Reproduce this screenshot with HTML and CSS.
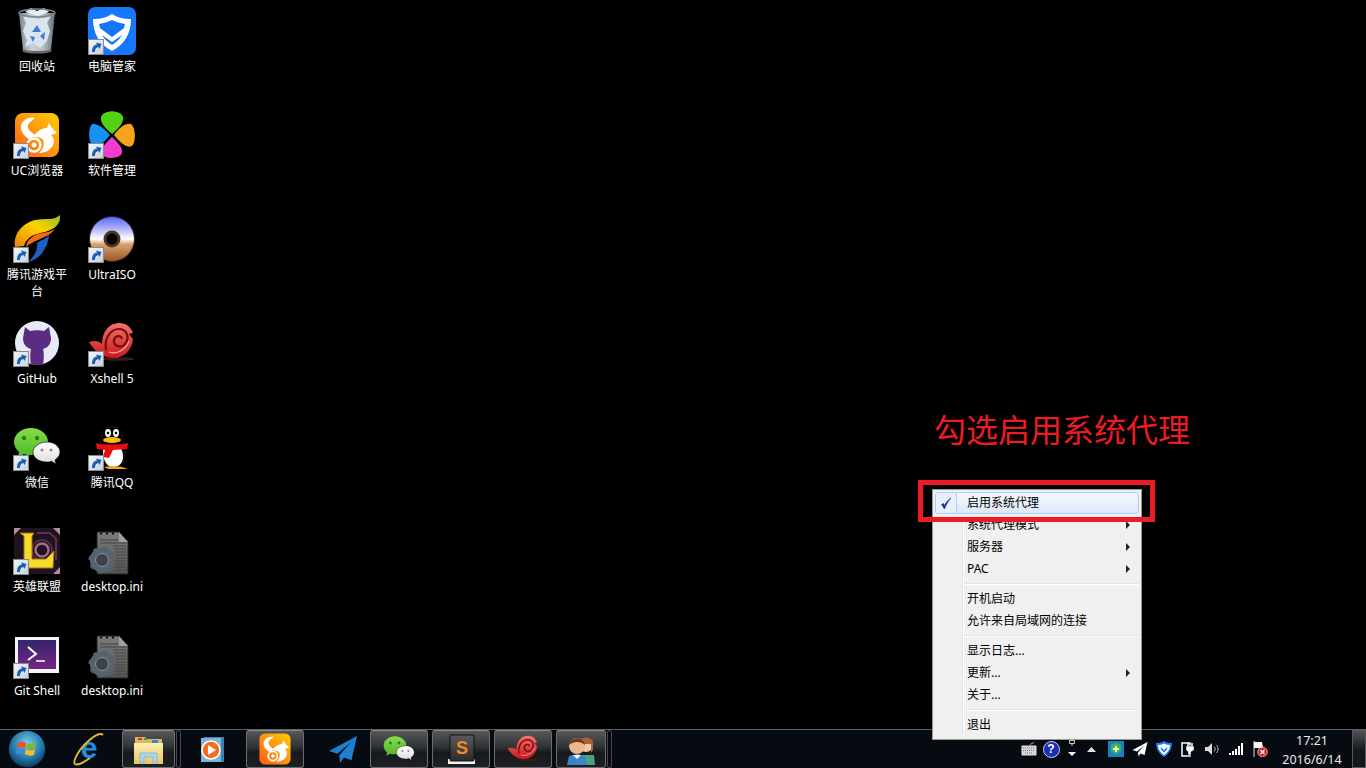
FILE: index.html
```html
<!DOCTYPE html>
<html lang="zh-CN">
<head>
    <meta charset="UTF-8">
    <title>启用系统代理</title>
    <link rel="stylesheet" href="styles.css">
</head>
<body>
    <svg class="sprite" width="0" height="0">
        <defs>
            <linearGradient id="ucBg" x1="1" y1="0" x2="0" y2="1"><stop offset="0" stop-color="#ffcf00"/><stop offset="1" stop-color="#ff5a1a"/></linearGradient>
            <linearGradient id="shortBg" x1="0" y1="0" x2="1" y2="1"><stop offset="0" stop-color="#f4f7fb"/><stop offset="1" stop-color="#c3d2e4"/></linearGradient>
            <linearGradient id="wechatBg" x1="0" y1="0" x2="0" y2="1"><stop offset="0" stop-color="#86dd4a"/><stop offset="1" stop-color="#4fb82a"/></linearGradient>
            <linearGradient id="wechatWhite" x1="0" y1="0" x2="0" y2="1"><stop offset="0" stop-color="#fff"/><stop offset="1" stop-color="#dcdcdc"/></linearGradient>
            <linearGradient id="snail" x1="0" y1="0" x2="0" y2="1"><stop offset="0" stop-color="#f4736a"/><stop offset="1" stop-color="#c9181e"/></linearGradient>
            <linearGradient id="paper" x1="0" y1="0" x2="0" y2="1"><stop offset="0" stop-color="#7a7a7a"/><stop offset="1" stop-color="#565656"/></linearGradient>
            <linearGradient id="gitBg" x1="0" y1="0" x2="0" y2="1"><stop offset="0" stop-color="#33256f"/><stop offset="1" stop-color="#74277f"/></linearGradient>
            <linearGradient id="binBg" x1="0" y1="0" x2="1" y2="0"><stop offset="0" stop-color="#87939f"/><stop offset=".35" stop-color="#dfe8f2"/><stop offset=".7" stop-color="#c5d0dc"/><stop offset="1" stop-color="#6b7682"/></linearGradient>
            <linearGradient id="discTop" x1="0" y1="0" x2="0" y2="1"><stop offset="0" stop-color="#5b63f5"/><stop offset=".25" stop-color="#a9adf8"/><stop offset=".5" stop-color="#ffffff"/><stop offset=".62" stop-color="#d8a06e"/><stop offset="1" stop-color="#9a5627"/></linearGradient>
            <linearGradient id="flame" x1="1" y1="0" x2="0" y2="1"><stop offset="0" stop-color="#8fc31f"/><stop offset=".45" stop-color="#ffd200"/><stop offset="1" stop-color="#e8800a"/></linearGradient>
            <linearGradient id="folder" x1="0" y1="0" x2="0" y2="1"><stop offset="0" stop-color="#fdf0b0"/><stop offset="1" stop-color="#e6c468"/></linearGradient>
            <radialGradient id="orb" cx=".5" cy=".35" r=".7"><stop offset="0" stop-color="#7fcdee"/><stop offset=".6" stop-color="#1f74a8"/><stop offset="1" stop-color="#0b2c4a"/></radialGradient>
            <linearGradient id="slate" x1="0" y1="0" x2="0" y2="1"><stop offset="0" stop-color="#5a5a5a"/><stop offset="1" stop-color="#2c2c2c"/></linearGradient>

            <symbol id="shortcut" viewBox="0 0 16 16">
                <rect x=".5" y=".5" width="15" height="15" fill="url(#shortBg)" stroke="#8a8a8a"/>
                <path d="M4 13C4 8 6 6 9 5.500L8 3.500 13.500 5 11.500 10 10.500 8C8 8.500 7 10 7 13Z" fill="#1d5fae"/>
            </symbol>
            <symbol id="uc" viewBox="0 0 48 48">
                <rect x="2" y="2" width="44" height="44" rx="8" fill="url(#ucBg)"/>
                <path d="M22 7C14 5 7 11 8 18 9 23 13 26 17 29L22 24C18 21 14 18 15 14 16 11 19 10 22 7Z" fill="#fff"/>
                <path d="M20 26C24 20 29 17 34 17L36 12 39 17 44 22 38 24C42 28 42 33 38 37 36 40 30 42 26 42 30 38 32 34 30 29 28 26 24 26 20 26Z" fill="#fff"/>
                <circle cx="21" cy="34" r="6.500" fill="none" stroke="#fff" stroke-width="2.500"/>
                <circle cx="21" cy="34" r="2.500" fill="#fff"/>
            </symbol>
            <symbol id="wechat" viewBox="0 0 48 48">
                <path d="M18 5C9 5 1 11 1 19 1 23 3 26 6 29L5 34 11 31C13 32 15 32 18 32 27 32 35 26 35 19 35 11 27 5 18 5Z" fill="url(#wechatBg)"/>
                <circle cx="11" cy="15" r="2.200" fill="#2e7d1a"/><circle cx="24" cy="15" r="2.200" fill="#2e7d1a"/>
                <path d="M34 19C26 19 20 24 20 29 20 35 26 39 34 39 36 39 37 39 38 38L43 41 42 37C45 35 47 32 47 29 47 24 42 19 34 19Z" fill="url(#wechatWhite)" stroke="#000" stroke-width=".6"/>
                <circle cx="29" cy="27" r="1.500" fill="#888"/><circle cx="38" cy="27" r="1.500" fill="#888"/>
            </symbol>
            <symbol id="xshell" viewBox="0 0 48 48">
                <ellipse cx="30" cy="40" rx="16" ry="1.800" fill="#3a1a1a"/>
                <path d="M1 23C7 21 11 22 14 25 14 13 21 4 31 4 38 4 43 8 45 14L41 15 45 20C44 31 36 39 26 39 15 39 7 33 1 23Z" fill="url(#snail)"/>
                <path d="M18 31C16 20 22 10 31 10 39 10 42 19 37 25 33 30 25 27 26 21 27 16 33 16 34 20" fill="none" stroke="#7c0d10" stroke-width="2.200"/>
                <path d="M21 33C28 36 38 31 41 22" fill="none" stroke="#f7a9a0" stroke-width="1.200"/>
            </symbol>
            <symbol id="iniFile" viewBox="0 0 48 48">
                <path d="M9 5H31L40 15V47H9Z" fill="url(#paper)" stroke="#222"/>
                <path d="M31 5V15H40Z" fill="#9f9f9f"/>
                <circle cx="13" cy="6.500" r="1.100" fill="#000"/><circle cx="19" cy="6.500" r="1.100" fill="#000"/><circle cx="25" cy="6.500" r="1.100" fill="#000"/>
                <path d="M12 13H30M12 16H38M25 19H38M26 22H38M27 25H38M27 28H38M27 31H38M27 34H38M27 37H38M27 40H38M27 43H38" stroke="#454545"/>
                <circle cx="14" cy="33" r="9.500" fill="none" stroke="#56636f" stroke-width="5.500"/>
                <circle cx="14" cy="33" r="12" fill="none" stroke="#56636f" stroke-width="3" stroke-dasharray="4 5.400"/>
                <circle cx="14" cy="33" r="6.500" fill="#3d4247" stroke="#8a97a4"/>
            </symbol>
            <symbol id="plane" viewBox="0 0 32 32">
                <path d="M31 2 1 18 10 21 24 9 12 23 13 31 17 25 25 28Z"/>
            </symbol>
        </defs>
    </svg>

    <main class="desktop">
        <a class="shortcut">
            <svg class="icon" viewBox="0 0 48 48">
                <path d="M6 6 10 43C12 46 36 46 38 43L42 6Z" fill="url(#binBg)" opacity=".9"/>
                <path d="M10 9 13 16 10 24 14 33 12 40 20 36 27 41 34 34 37 24 34 16 38 9 25 12Z" fill="#d9e4ef"/>
                <path d="M12 5 18 1 24 4 31 1 36 5 25 9Z" fill="#e9eef4"/>
                <ellipse cx="24" cy="6" rx="18" ry="4" fill="none" stroke="#7b858f" stroke-width="1.500"/>
                <path d="M19 25 24 18 28 25ZM17 29 22 30 20 35ZM27 29 32 25 31 33Z" fill="#3b7bd4"/>
                <path d="M10 43C12 46 36 46 38 43" fill="none" stroke="#6a6a6a" stroke-width="2.500"/>
            </svg>
            <span class="label">回收站</span>
        </a>
        <a class="shortcut">
            <svg class="icon" viewBox="0 0 48 48">
                <rect width="48" height="48" rx="7" fill="#1677fb"/>
                <path d="M24 7C30 11 36 12 43 12 43 26 37 37 24 44 11 37 5 26 5 12 12 12 18 11 24 7Z" fill="#fff"/>
                <path d="M24 13C28 15 32 16 37 17L36 21 24 30 12 21 11 17C16 16 20 15 24 13Z" fill="#1677fb"/>
                <path d="M14 28 24 35 34 28C32 32 28 35 24 38 20 35 16 32 14 28Z" fill="#1677fb"/>
            </svg>
            <svg class="badge"><use href="#shortcut"/></svg>
            <span class="label">电脑管家</span>
        </a>
        <a class="shortcut">
            <svg class="icon"><use href="#uc"/></svg>
            <svg class="badge"><use href="#shortcut"/></svg>
            <span class="label">UC浏览器</span>
        </a>
        <a class="shortcut">
            <svg class="icon" viewBox="0 0 48 48">
                <path d="M24 23C17 17 10 10 14 4 19 -1 29 -1 34 4 38 10 31 17 24 23Z" fill="#52d214"/>
                <path d="M26 24C31 17 37 12 43 13 48 17 48 31 44 35 38 38 31 30 26 24Z" fill="#f6a21e"/>
                <path d="M24 26C30 32 37 38 33 44 28 48 18 48 14 44 11 38 18 32 24 26Z" fill="#f03ccf"/>
                <path d="M22 24C17 30 11 37 5 35 0 31 0 17 4 13 10 12 17 18 22 24Z" fill="#1592f5"/>
            </svg>
            <svg class="badge"><use href="#shortcut"/></svg>
            <span class="label">软件管理</span>
        </a>
        <a class="shortcut">
            <svg class="icon" viewBox="0 0 48 48">
                <path d="M47 0C48 9 42 14 32 17 22 19 14 21 11 31L2 32C0 20 8 9 22 5 33 3 41 6 47 0Z" fill="url(#flame)"/>
                <path d="M42 14C38 20 31 22 25 25 20 27 16 29 13 32 14 24 21 19 30 18 35 17 39 16 42 14Z" fill="#f26a11"/>
                <path d="M36 20C35 32 28 44 15 47 22 41 25 34 24 28 28 25 33 24 36 20Z" fill="#1f5fc2"/>
            </svg>
            <svg class="badge"><use href="#shortcut"/></svg>
            <span class="label">腾讯游戏平台</span>
        </a>
        <a class="shortcut">
            <svg class="icon" viewBox="0 0 48 48">
                <circle cx="24" cy="24" r="22.500" fill="url(#discTop)" stroke="#2b2320"/>
                <circle cx="24" cy="24" r="8.500" fill="#4a3528"/>
                <circle cx="24" cy="24" r="5.500" fill="#000"/>
            </svg>
            <svg class="badge"><use href="#shortcut"/></svg>
            <span class="label">UltraISO</span>
        </a>
        <a class="shortcut">
            <svg class="icon" viewBox="0 0 48 48">
                <circle cx="24" cy="24" r="22" fill="#e9eaf7"/>
                <path d="M12 8 17 12C21 11 27 11 31 12L36 8 38 19C38 26 34 29 30 30 31 33 31 41 30 46H18C17 41 17 33 18 30 14 29 10 26 10 19Z" fill="#5a2d83"/>
            </svg>
            <svg class="badge"><use href="#shortcut"/></svg>
            <span class="label">GitHub</span>
        </a>
        <a class="shortcut">
            <svg class="icon"><use href="#xshell"/></svg>
            <svg class="badge"><use href="#shortcut"/></svg>
            <span class="label">Xshell 5</span>
        </a>
        <a class="shortcut">
            <svg class="icon"><use href="#wechat"/></svg>
            <svg class="badge"><use href="#shortcut"/></svg>
            <span class="label">微信</span>
        </a>
        <a class="shortcut">
            <svg class="icon" viewBox="0 0 48 48">
                <path d="M14 14C14 8 18 4 24 4 30 4 34 8 34 14 38 22 38 36 33 43H15C10 36 10 22 14 14Z" fill="#000" stroke="#1c1c1c"/>
                <ellipse cx="20" cy="10" rx="3" ry="4" fill="#fff"/><ellipse cx="28" cy="10" rx="3" ry="4" fill="#fff"/>
                <circle cx="20" cy="10" r="1.300" fill="#000"/><circle cx="28" cy="10" r="1.300" fill="#000"/>
                <ellipse cx="24" cy="17" rx="9" ry="3" fill="#fbb90f"/>
                <path d="M15 28C15 24 19 22 24 22 31 22 35 25 35 34 35 40 31 44 25 44 19 44 15 38 15 28Z" fill="#fff"/>
                <path d="M8 20C16 22 30 22 40 20L39 26 25 27 21 35 15 34 17 27 9 26Z" fill="#e50f0f"/>
                <path d="M16 44C20 43 30 43 34 44L40 46H20Z" fill="#f9a51a"/>
            </svg>
            <svg class="badge"><use href="#shortcut"/></svg>
            <span class="label">腾讯QQ</span>
        </a>
        <a class="shortcut">
            <svg class="icon" viewBox="0 0 48 48">
                <path d="M1 1H47V47H1Z" fill="#1d1420"/>
                <path d="M1 1 8 1 1 8ZM47 1V8L40 1ZM47 47H40L47 40ZM1 47V40L8 47Z" fill="#b78a96"/>
                <path d="M24 6H37L43 12V33" fill="none" stroke="#5e3150" stroke-width="2"/>
                <circle cx="29" cy="23" r="6.500" fill="none" stroke="#a8678a" stroke-width="2.500"/>
                <circle cx="29" cy="23" r="10" fill="none" stroke="#5e3150" stroke-width="1.500"/>
                <path d="M7 6H21L19 9V32H33L41 24 40 41H11L10 39 11 36V9Z" fill="#f6dc2a" stroke="#b36b09"/>
            </svg>
            <svg class="badge"><use href="#shortcut"/></svg>
            <span class="label">英雄联盟</span>
        </a>
        <a class="shortcut">
            <svg class="icon"><use href="#iniFile"/></svg>
            <span class="label">desktop.ini</span>
        </a>
        <a class="shortcut">
            <svg class="icon" viewBox="0 0 48 48">
                <rect x="2" y="6" width="44" height="36" fill="#f4f4fb"/>
                <rect x="5" y="9" width="38" height="29" fill="url(#gitBg)"/>
                <path d="M15 16 23 23 15 29" fill="none" stroke="#fff" stroke-width="2"/>
                <path d="M23 30H32" stroke="#fff" stroke-width="1.500"/>
            </svg>
            <svg class="badge"><use href="#shortcut"/></svg>
            <span class="label">Git Shell</span>
        </a>
        <a class="shortcut">
            <svg class="icon"><use href="#iniFile"/></svg>
            <span class="label">desktop.ini</span>
        </a>
    </main>

    <footer class="taskbar">
        <div class="slot slot-start">
            <svg width="38" height="38" viewBox="0 0 38 38">
                <circle cx="19" cy="19" r="18.500" fill="url(#orb)" stroke="#0a1722"/>
                <path d="M10 13C13 11 15 12 18 13L17 18C14 17 12 17 9 18Z" fill="#e8562a"/>
                <path d="M19 13C22 15 25 14 28 12L27 18C24 20 21 20 18 18Z" fill="#7cbb2c"/>
                <path d="M9 19C12 18 14 18 17 19L16 24C13 23 11 23 8 24Z" fill="#3b8fd8"/>
                <path d="M18 19C21 21 24 21 27 19L26 25C23 26 20 26 17 24Z" fill="#f4bb2a"/>
            </svg>
        </div>
        <div class="slot slot-ie">
            <svg width="34" height="36" viewBox="0 0 34 36">
                <text class="ie-letter" x="17" y="27" text-anchor="middle">e</text>
                <path d="M31 4C27 0 16 9 8 19 4 25 1 31 3 33 6 35 12 31 18 27" fill="none" stroke="#e8b52a" stroke-width="2"/>
            </svg>
        </div>
        <button class="task-btn task-explorer">
            <svg width="34" height="34" viewBox="0 0 34 34">
                <path d="M3 5H13L15 7H30V32H3Z" fill="#d8b860"/>
                <rect x="6" y="6" width="4" height="2" fill="#d33"/><rect x="12" y="6" width="4" height="2" fill="#3a3"/><rect x="20" y="8" width="6" height="3" fill="#38c"/>
                <path d="M2 11H31V32H2Z" fill="url(#folder)"/>
                <path d="M8 21H25V31H21V25H12V31H8Z" fill="#a8d4ee" stroke="#6fa8cc" stroke-width=".6"/>
            </svg>
        </button>
        <span class="grip"></span>
        <div class="slot slot-media">
            <svg width="30" height="30" viewBox="0 0 30 30">
                <rect x="7" y="3" width="20" height="25" fill="#3f7fa8"/>
                <rect x="4" y="4" width="20" height="24" fill="#79b3da"/>
                <circle cx="14" cy="16" r="9" fill="#f26d1d" stroke="#fff" stroke-width="1.500"/>
                <path d="M11 11 19 16 11 21Z" fill="#fff"/>
            </svg>
        </div>
        <button class="task-btn task-uc"><svg width="34" height="34"><use href="#uc"/></svg></button>
        <div class="slot slot-plane"><svg class="plane-blue" width="30" height="30"><use href="#plane"/></svg></div>
        <button class="task-btn"><svg width="32" height="32"><use href="#wechat"/></svg></button>
        <button class="task-btn task-gap">
            <svg width="32" height="32" viewBox="0 0 32 32">
                <path d="M3 26H30V31H3Z" fill="#f1f1f1"/>
                <rect x="5" y="2" width="24" height="26" rx="1" fill="url(#slate)" stroke="#111"/>
                <text class="sublime-letter" x="17" y="21" text-anchor="middle">S</text>
            </svg>
        </button>
        <button class="task-btn task-gap"><svg width="32" height="32"><use href="#xshell"/></svg></button>
        <button class="task-btn task-gap task-users">
            <svg width="30" height="32" viewBox="0 0 30 32">
                <circle cx="20" cy="12" r="7" fill="#f3c7a4"/>
                <path d="M13 9C14 3 26 3 27 9V17L25 20V11L15 11Z" fill="#a8633a"/>
                <path d="M14 22H28L29 32H14Z" fill="#4aa37c"/>
                <circle cx="11" cy="13" r="8" fill="#eab78e"/>
                <path d="M3 12C3 3 19 3 19 12 15 8 8 8 3 12Z" fill="#6d3a1f"/>
                <path d="M1 32 3 23 11 21 19 23 21 32Z" fill="#3d86c6"/>
                <path d="M7 22 11 26 15 22Z" fill="#fff"/>
            </svg>
        </button>
        <span class="grip"></span>

        <div class="tray">
            <span class="tray-item tray-kbd">
                <svg width="16" height="14" viewBox="0 0 16 14">
                    <path d="M9 3C9 1 13 2 13 0" fill="none" stroke="#999"/>
                    <rect x=".5" y="3.500" width="15" height="10" rx="1" fill="#d8d8d8" stroke="#777"/>
                    <path d="M2 6H14M2 8.500H14M4 11H12" stroke="#777" stroke-dasharray="1 1"/>
                </svg>
            </span>
            <span class="tray-item tray-help"><span class="help-dot">?</span></span>
            <span class="tray-item tray-arrows">
                <svg width="10" height="18" viewBox="0 0 10 18">
                    <path d="M2.500 .5H7.500V3.500H2.500ZM5 3.500V6" fill="none" stroke="#ccc"/>
                    <path d="M1 12H9L5 16Z" fill="#fff"/>
                </svg>
            </span>
            <span class="tray-item tray-up"><svg width="9" height="5" viewBox="0 0 9 5"><path d="M0 5 4.500 0 9 5Z" fill="#e4e4e4"/></svg></span>
            <span class="tray-item tray-first">
                <svg width="16" height="16" viewBox="0 0 16 16">
                    <rect width="16" height="16" fill="#1583c9"/>
                    <path d="M8 2 13 3.500V8C13 10.500 11 12 8 13 5 12 3 10.500 3 8V3.500Z" fill="#46b04a"/>
                    <path d="M7 5H9V7H11V9H9V11H7V9H5V7H7Z" fill="#dff5d8"/>
                </svg>
            </span>
            <span class="tray-item"><svg class="plane-white" width="16" height="16"><use href="#plane"/></svg></span>
            <span class="tray-item">
                <svg width="16" height="16" viewBox="0 0 16 16">
                    <path d="M8 0C10 1.500 13 2 16 2 16 8 13 13 8 16 3 13 0 8 0 2 3 2 6 1.500 8 0Z" fill="#1c7cf2"/>
                    <path d="M8 2.500C10 3.500 12 4 14 4 14 8 12 11.500 8 14 4 11.500 2 8 2 4 4 4 6 3.500 8 2.500Z" fill="#fff"/>
                    <path d="M4.500 6 8 9 11.500 6 11 8.500 8 11.500 5 8.500Z" fill="#1c7cf2"/>
                </svg>
            </span>
            <span class="tray-item">
                <svg width="14" height="16" viewBox="0 0 14 16">
                    <path d="M1 2H9V15H1Z" fill="none" stroke="#fff" stroke-width="1.500"/>
                    <path d="M5 5H13V9L10 11V14H7V11L5 9Z" fill="#fff" stroke="#111" stroke-width=".5"/>
                    <path d="M7 2V5M11 2V5" stroke="#fff" stroke-width="1.500"/>
                </svg>
            </span>
            <span class="tray-item">
                <svg width="16" height="14" viewBox="0 0 16 14">
                    <path d="M1 5H4L8 1V13L4 9H1Z" fill="#dcdcdc"/>
                    <path d="M10 4.500C11.500 6 11.500 8 10 9.500M12.500 3C14.500 5 14.500 9 12.500 11" fill="none" stroke="#bbb"/>
                </svg>
            </span>
            <span class="tray-item">
                <svg width="16" height="12" viewBox="0 0 16 12">
                    <path d="M1 10H3V12H1ZM4 8H6V12H4ZM7 6H9V12H7ZM10 3H12V12H10ZM13 0H15V12H13Z" fill="#fff"/>
                </svg>
            </span>
            <span class="tray-item">
                <svg width="16" height="16" viewBox="0 0 16 16">
                    <path d="M2 0V16" stroke="#ddd"/>
                    <path d="M2 1H10L11 7H2Z" fill="#fff"/>
                    <circle cx="10.500" cy="11" r="4.800" fill="#e01f1f" stroke="#fff" stroke-width=".6"/>
                    <path d="M8.500 9 12.500 13M12.500 9 8.500 13" stroke="#fff" stroke-width="1.300"/>
                </svg>
            </span>
            <div class="clock">
                <span>17:21</span>
                <span>2016/6/14</span>
            </div>
            <span class="show-desktop"></span>
        </div>
    </footer>

    <!-- context menu of the tray icon, plus the note drawn on the screenshot -->
    <p class="note">勾选启用系统代理</p>
    <ul class="menu">
        <li class="menu-item menu-checked">
            <span class="check-box">
                <svg width="12" height="13" viewBox="0 0 12 13"><path d="M1.500 7.500 4.500 12C6 8 8 4 11 1 8 3 6 5.500 4.500 8.500L3.500 6.500Z" fill="#1c2a96" stroke="#1c2a96" stroke-width=".6"/></svg>
            </span>启用系统代理
        </li>
        <li class="menu-item has-sub">系统代理模式</li>
        <li class="menu-item has-sub">服务器</li>
        <li class="menu-item has-sub">PAC</li>
        <li class="menu-sep"></li>
        <li class="menu-item">开机启动</li>
        <li class="menu-item">允许来自局域网的连接</li>
        <li class="menu-sep"></li>
        <li class="menu-item">显示日志...</li>
        <li class="menu-item has-sub">更新...</li>
        <li class="menu-item">关于...</li>
        <li class="menu-sep"></li>
        <li class="menu-item">退出</li>
    </ul>
    <div class="mark"></div>
</body>
</html>
```

FILE: styles.css
```css
body {
    margin: 0;
    height: 768px;
    overflow: hidden;
    display: flex;
    flex-direction: column;
    background-color: #000;
    font-family: "Noto Sans", "Noto Sans CJK SC", sans-serif;
    font-size: 12px;
}

.sprite {
    position: absolute;
}

/* desktop icons */
.desktop {
    flex: none;
    height: 729px;
    display: grid;
    grid-template-columns: repeat(2, 75px);
    grid-auto-rows: 104px;
}

.shortcut {
    position: relative;
    display: flex;
    flex-direction: column;
    padding-top: 7px;
    color: #fff;
}

.icon {
    width: 48px;
    height: 48px;
    margin-left: 13px;
}

.badge {
    position: absolute;
    left: 13px;
    top: 39px;
    width: 16px;
    height: 16px;
}

.label {
    margin-top: 3px;
    padding: 0 7px 0 6px;
    line-height: 17px;
    text-align: center;
}

/* taskbar */
.taskbar {
    flex: none;
    height: 38px;
    display: flex;
    align-items: stretch;
    background-color: #060b11;
    border-top: 1px solid #5c6064;
}

.slot {
    display: flex;
    align-items: center;
    justify-content: center;
}

.slot-start { width: 54px; }
.slot-ie { width: 54px; margin-left: 8px; }
.slot-media { width: 58px; margin-left: 2px; }
.slot-plane { width: 54px; margin-left: 12px; }

.task-btn {
    width: 58px;
    padding: 0;
    display: flex;
    align-items: center;
    justify-content: center;
    border: 1px solid #6a6d70;
    border-top-color: #8a8d90;
    border-radius: 3px;
    background: linear-gradient(to bottom, #55585b 0%, #2f3235 45%, #17191c 60%, #1d2023 100%);
}

.task-explorer { width: 53px; margin-left: 6px; }
.task-uc { margin-left: 5px; }
.task-gap { margin-left: 4px; }
.task-users { width: 50px; }

.grip {
    width: 3px;
    margin-left: 1px;
    border: 1px solid #45484b;
    border-radius: 2px;
}

.plane-blue { fill: #1d7fcf; }
.plane-white { fill: #fff; }

.ie-letter {
    font-family: "Liberation Sans", sans-serif;
    font-size: 30px;
    font-weight: 700;
    fill: #1d8fe0;
}

.sublime-letter {
    font-family: "Liberation Sans", sans-serif;
    font-size: 18px;
    font-weight: 700;
    fill: #f08a24;
}

/* notification area */
.tray {
    margin-left: auto;
    width: 348px;
    display: flex;
    align-items: center;
}

.tray-item {
    width: 24px;
    display: flex;
    align-items: center;
    justify-content: center;
}

.tray-kbd { width: 22px; }
.tray-help { width: 22px; }
.tray-arrows { width: 20px; }
.tray-up { width: 18px; }
.tray-first { margin-left: 4px; }

.help-dot {
    width: 15px;
    height: 15px;
    border-radius: 50%;
    background-color: #1b2fb5;
    border: 1px solid #cfd6ee;
    color: #fff;
    font-family: "Liberation Sans", sans-serif;
    font-size: 12px;
    font-weight: 700;
    line-height: 15px;
    text-align: center;
}

.clock {
    width: 80px;
    padding-top: 2px;
    display: flex;
    flex-direction: column;
    align-items: center;
    color: #eaeaea;
    font-size: 12.500px;
    line-height: 19px;
}

.show-desktop {
    width: 12px;
    align-self: stretch;
    border: 1px solid #55585b;
    background: linear-gradient(to bottom, #4e5154, #15181b 55%);
}

/* context menu */
.menu {
    position: absolute;
    left: 932px;
    top: 489px;
    width: 208px;
    margin: 0;
    padding: 2px 0 3px;
    list-style: none;
    border: 1px solid #979797;
    background-color: #f0f0f0;
    background-image: linear-gradient(to right, transparent 29px, #e2e3e3 29px, #e2e3e3 30px, #fff 30px, #fff 31px, transparent 31px);
    color: #000;
}

.menu-item {
    position: relative;
    height: 22px;
    padding-left: 34px;
    line-height: 22px;
}

.menu-checked {
    height: 20px;
    line-height: 20px;
    margin: 0 2px;
    padding-left: 31px;
    border: 1px solid #aecff7;
    border-radius: 3px;
    background: linear-gradient(to bottom, #f4f8fe, #dde8f7);
}

.check-box {
    position: absolute;
    left: 0;
    top: 0;
    width: 20px;
    height: 20px;
    display: flex;
    align-items: center;
    justify-content: center;
    border-right: 1px solid #aecff7;
    background-color: #e8effa;
}

.has-sub::after {
    content: "";
    position: absolute;
    right: 11px;
    top: 7px;
    border-left: 4px solid #222;
    border-top: 4px solid transparent;
    border-bottom: 4px solid transparent;
}

.menu-sep {
    height: 2px;
    margin: 3px 2px 3px 31px;
    background-color: #e2e3e3;
    border-bottom: 1px solid #fff;
    box-sizing: border-box;
}

/* annotation on top of the screenshot */
.note {
    position: absolute;
    left: 934px;
    top: 408px;
    margin: 0;
    font-size: 32px;
    line-height: 44px;
    color: #ed1c24;
}

.mark {
    position: absolute;
    left: 918px;
    top: 480px;
    width: 227px;
    height: 32px;
    border: 5px solid #ed1c24;
}
```
